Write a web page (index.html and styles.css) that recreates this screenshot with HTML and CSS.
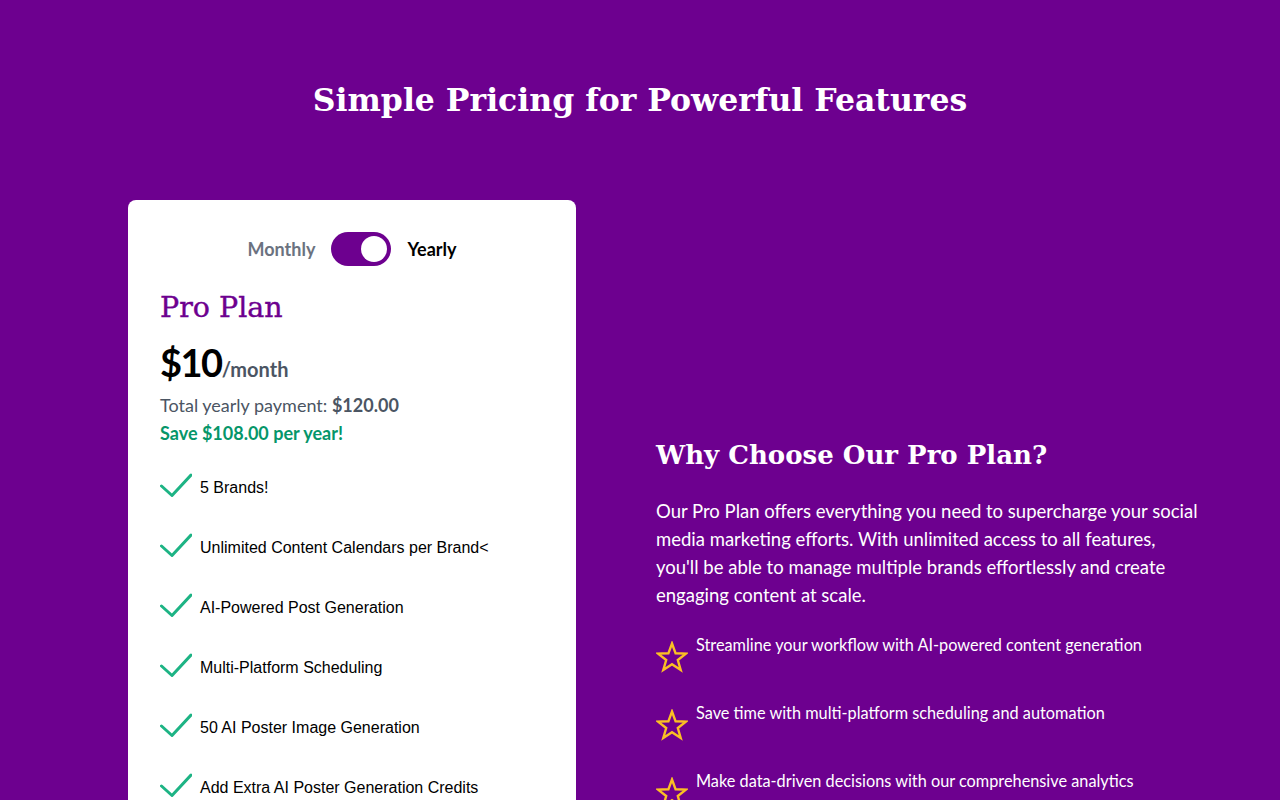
FILE: index.html
```html
<!DOCTYPE html>
<html lang="en">
<head>
<meta charset="utf-8">
<title>Pricing</title>
<link rel="stylesheet" href="styles.css">
</head>
<body>
<main class="page">
  <h1 class="title">Simple Pricing for Powerful Features</h1>
  <div class="columns">
    <section class="card">
      <div class="toggle-row">
        <span class="toggle-label muted">Monthly</span>
        <span class="switch"><span class="knob"></span></span>
        <span class="toggle-label active">Yearly</span>
      </div>
      <h2 class="plan-name">Pro Plan</h2>
      <div class="price"><span class="amount">$10</span><span class="per">/month</span></div>
      <p class="total">Total yearly payment: <strong>$120.00</strong></p>
      <p class="save">Save $108.00 per year!</p>
      <ul class="features">
        <li><svg class="check" viewBox="0 0 32 24"><polyline points="1.5,13 12,22.5 31,2"/></svg><span>5 Brands!</span></li>
        <li><svg class="check" viewBox="0 0 32 24"><polyline points="1.5,13 12,22.5 31,2"/></svg><span>Unlimited Content Calendars per Brand&lt;</span></li>
        <li><svg class="check" viewBox="0 0 32 24"><polyline points="1.5,13 12,22.5 31,2"/></svg><span>AI-Powered Post Generation</span></li>
        <li><svg class="check" viewBox="0 0 32 24"><polyline points="1.5,13 12,22.5 31,2"/></svg><span>Multi-Platform Scheduling</span></li>
        <li><svg class="check" viewBox="0 0 32 24"><polyline points="1.5,13 12,22.5 31,2"/></svg><span>50 AI Poster Image Generation</span></li>
        <li><svg class="check" viewBox="0 0 32 24"><polyline points="1.5,13 12,22.5 31,2"/></svg><span>Add Extra AI Poster Generation Credits</span></li>
      </ul>
    </section>
    <section class="why">
      <h2 class="why-title">Why Choose Our Pro Plan?</h2>
      <p class="why-text">Our Pro Plan offers everything you need to supercharge your social media marketing efforts. With unlimited access to all features,<br>you'll be able to manage multiple brands effortlessly and create engaging content at scale.</p>
      <ul class="benefits">
        <li><svg class="star" viewBox="0 0 32 32"><polygon points="16,2.5 19.6,12.3 30,12.6 21.8,19 24.7,29 16,23.2 7.3,29 10.2,19 2,12.6 12.4,12.3"/></svg><span>Streamline your workflow with AI-powered content generation</span></li>
        <li><svg class="star" viewBox="0 0 32 32"><polygon points="16,2.5 19.6,12.3 30,12.6 21.8,19 24.7,29 16,23.2 7.3,29 10.2,19 2,12.6 12.4,12.3"/></svg><span>Save time with multi-platform scheduling and automation</span></li>
        <li><svg class="star" viewBox="0 0 32 32"><polygon points="16,2.5 19.6,12.3 30,12.6 21.8,19 24.7,29 16,23.2 7.3,29 10.2,19 2,12.6 12.4,12.3"/></svg><span>Make data-driven decisions with our comprehensive analytics</span></li>
      </ul>
    </section>
  </div>
</main>
</body>
</html>
```

FILE: styles.css
```css
* { box-sizing: border-box; }
html, body { margin: 0; padding: 0; }
body {
  background: #6d008f;
  font-family: Lato, "Noto Sans", sans-serif;
  color: #fff;
  height: 800px;
  overflow: hidden;
}
.page {
  padding: 72px 64px 0 128px;
}
.title {
  margin: 0 -64px 0 -128px;
  text-align: center;
  font-family: "DejaVu Serif", "Liberation Serif", serif;
  font-weight: 700;
  font-size: 31.5px;
  line-height: 56px;
}
.columns {
  margin-top: 72px;
  display: grid;
  grid-template-columns: 448px 1fr;
  column-gap: 80px;
  align-items: start;
}
.card {
  background: #fff;
  border-radius: 8px;
  padding: 32px 32px 40px;
  color: #000;
}
.toggle-row {
  display: flex;
  justify-content: center;
  align-items: center;
  gap: 16px;
  height: 34px;
}
.toggle-label {
  font-size: 18px;
  font-weight: 700;
}
.toggle-label.muted { color: #6b7280; }
.toggle-label.active { color: #000; }
.switch {
  width: 60px;
  height: 34px;
  border-radius: 17px;
  background: #6d008f;
  display: flex;
  align-items: center;
  justify-content: flex-end;
  padding: 0 4px;
}
.knob {
  width: 26px;
  height: 26px;
  border-radius: 50%;
  background: #fff;
}
.plan-name {
  margin: 22px 0 0;
  font-family: "DejaVu Serif", "Liberation Serif", serif;
  font-weight: 400;
  font-size: 28.5px;
  line-height: 40px;
  color: #6d008f;
  -webkit-text-stroke: 0.4px #6d008f;
}
.price {
  margin-top: 14px;
  display: flex;
  align-items: baseline;
  line-height: 40px;
}
.amount {
  font-size: 38px;
  font-weight: 700;
  color: #000;
  letter-spacing: -1.5px;
}
.per {
  font-size: 20px;
  font-weight: 700;
  color: #4b5563;
}
.total {
  margin: 2px 0 0;
  font-size: 18px;
  line-height: 28px;
  color: #4b5563;
}
.total strong { font-weight: 700; color: #4b5563; }
.save {
  margin: 0;
  font-size: 18px;
  line-height: 28px;
  font-weight: 700;
  color: #059669;
}
.features {
  list-style: none;
  margin: 26px 0 0;
  padding: 0;
  display: flex;
  flex-direction: column;
  gap: 36px;
}
.features li {
  display: flex;
  align-items: flex-start;
  gap: 8px;
  height: 24px;
  font-family: "Liberation Sans", Arial, sans-serif;
  font-size: 16px;
  line-height: 24px;
  color: #000;
}
.features li span { padding-top: 3px; }
.check {
  width: 32px;
  height: 24px;
  flex: none;
  fill: none;
  stroke: #1db384;
  stroke-width: 3;
  stroke-linecap: round;
  stroke-linejoin: round;
}
.why {
  padding-top: 235px;
}
.why-title {
  margin: 0;
  font-family: "DejaVu Serif", "Liberation Serif", serif;
  font-weight: 700;
  font-size: 26px;
  line-height: 40px;
  color: #fff;
}
.why-text {
  margin: 22px 0 0;
  font-size: 18.5px;
  line-height: 28px;
  max-width: 560px;
}
.benefits {
  list-style: none;
  margin: 24px 0 0;
  padding: 0;
  display: flex;
  flex-direction: column;
  gap: 28px;
}
.benefits li {
  display: flex;
  align-items: flex-start;
  gap: 8px;
  height: 40px;
  font-size: 16.3px;
  line-height: 24px;
}
.star {
  width: 32px;
  height: 32px;
  flex: none;
  margin-top: 8px;
  fill: none;
  stroke: #fbbf24;
  stroke-width: 2.4;
  stroke-linejoin: miter;
}
```
